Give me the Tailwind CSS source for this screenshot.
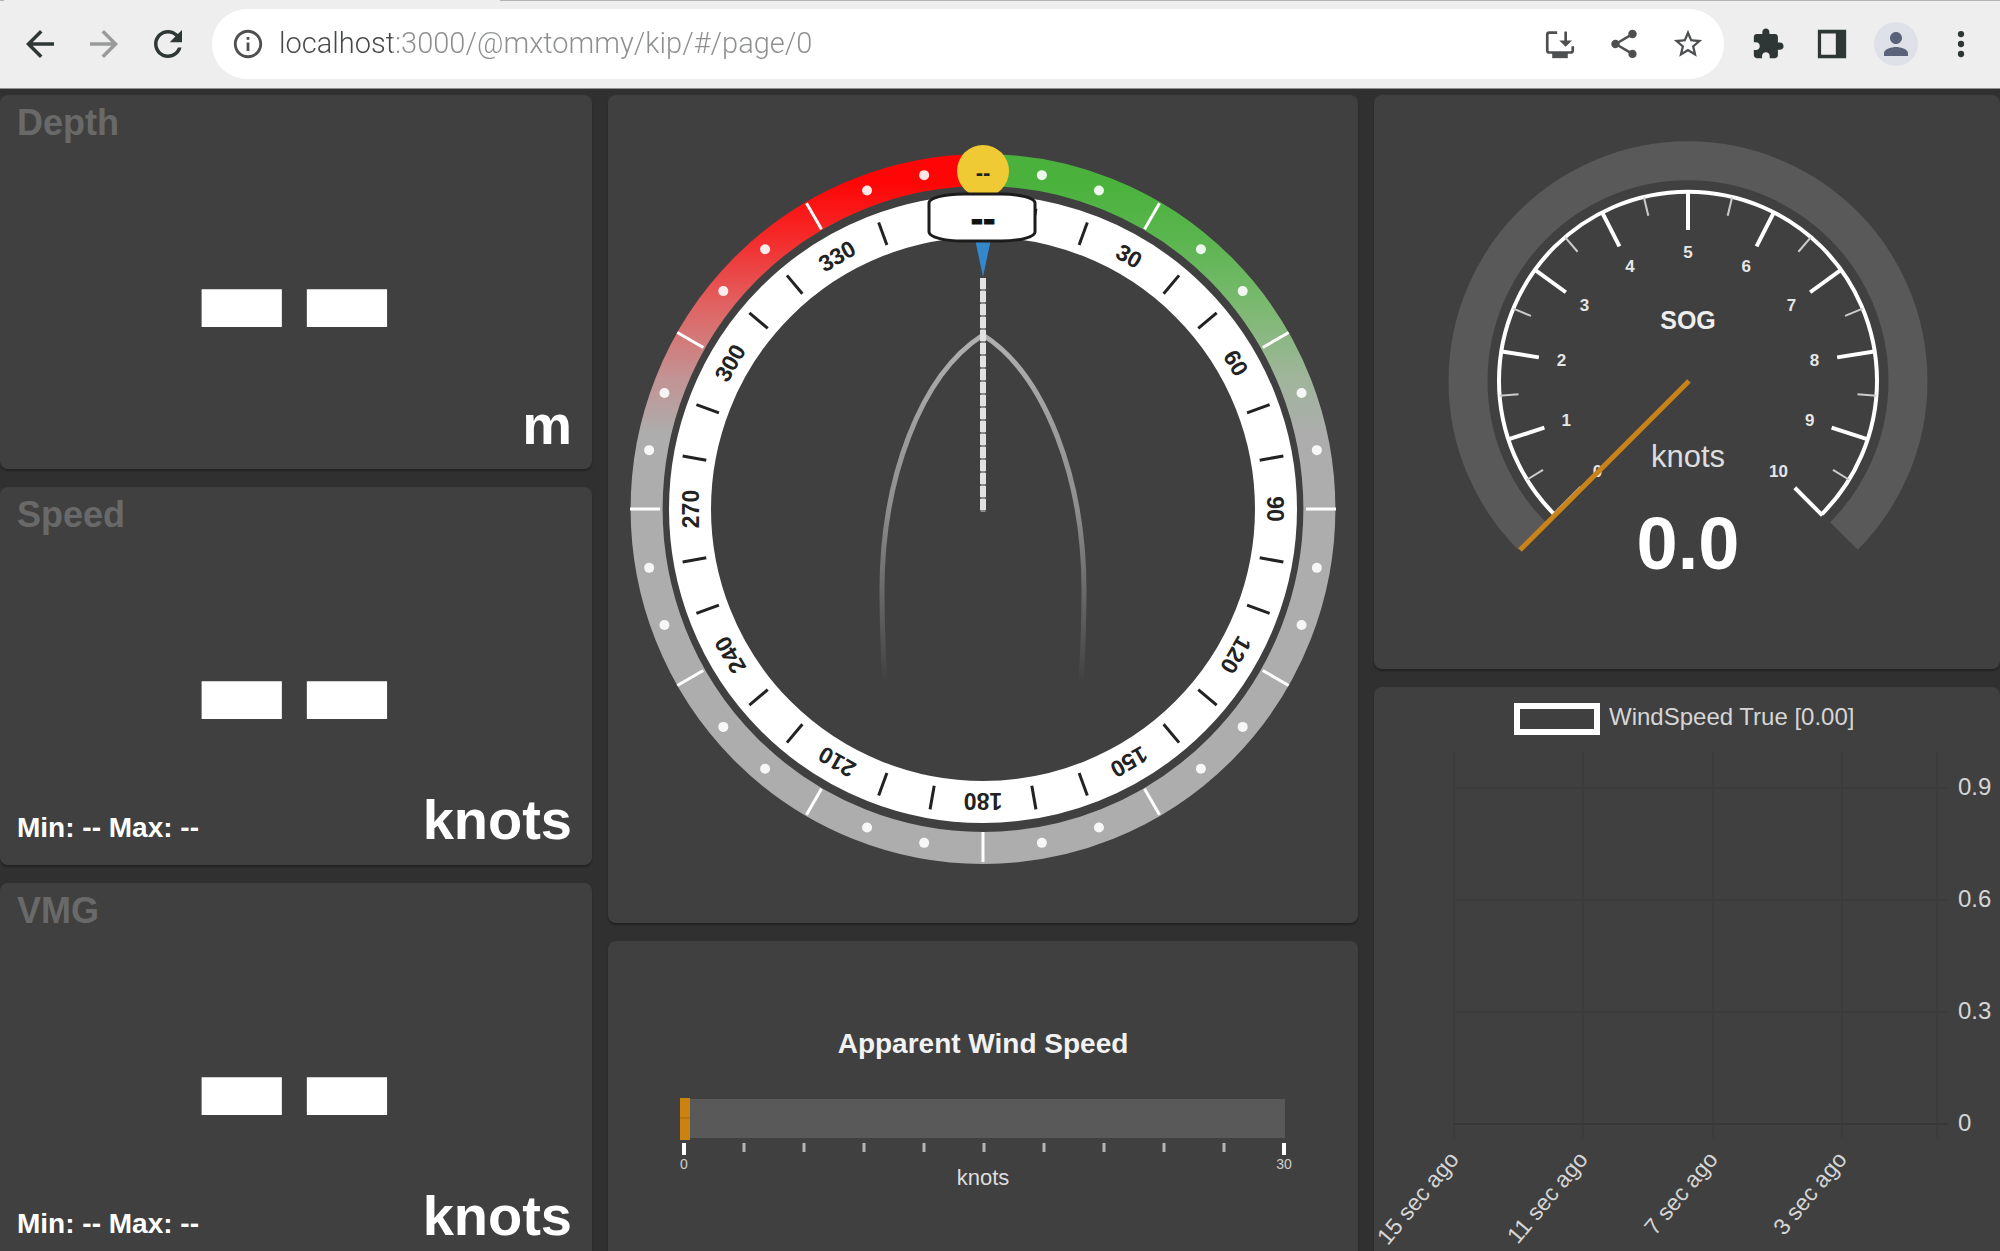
<!DOCTYPE html>
<html lang="en">
  <head>
    <meta charset="UTF-8" />
    <meta name="viewport" content="width=device-width, initial-scale=1.0" />
    <title>KIP</title>
    <script src="https://cdn.jsdelivr.net/npm/@tailwindcss/browser@4"></script>
  </head>
  <body class="flex h-screen flex-col overflow-hidden bg-[#303030] font-['Liberation_Sans',Arial,sans-serif] text-white">
    <!-- Browser toolbar -->
    <header class="relative flex shrink-0 items-center border-b border-[#8f8f8f] bg-[#eeeeee] py-[9px] pr-[18px] pl-[19px] text-[#2f3636]">
      <div class="absolute inset-x-0 top-0 flex h-px">
        <span class="w-1 bg-[#b4b4b4]"></span>
        <span class="w-[496px]"></span>
        <span class="flex-1 bg-[#b4b4b4]"></span>
      </div>
      <div class="mr-[23px] flex gap-[22px]">
        <button aria-label="Back">
          <svg class="size-[42px]" viewBox="0 0 24 24" fill="currentColor"><path d="M20 11H7.83l5.59-5.59L12 4l-8 8 8 8 1.41-1.41L7.83 13H20v-2z" /></svg>
        </button>
        <button aria-label="Forward" class="text-[#999b9b]">
          <svg class="size-[42px]" viewBox="0 0 24 24" fill="currentColor"><path d="M12 4l-1.41 1.41L16.17 11H4v2h12.17l-5.58 5.59L12 20l8-8z" /></svg>
        </button>
        <button aria-label="Reload">
          <svg class="size-[42px]" viewBox="0 0 24 24" fill="currentColor"><path d="M17.65 6.35C16.2 4.9 14.21 4 12 4c-4.42 0-7.99 3.58-7.99 8s3.57 8 7.99 8c3.73 0 6.84-2.55 7.73-6h-2.08c-.82 2.33-3.04 4-5.65 4-3.31 0-6-2.69-6-6s2.69-6 6-6c1.66 0 3.14.69 4.22 1.78L13 11h7V4l-2.35 2.35z" /></svg>
        </button>
      </div>
      <div class="flex h-[70px] flex-1 items-center rounded-full bg-white px-[19px] text-[#4d4f51]">
        <button aria-label="Site information" class="mr-[14px]">
          <svg class="size-[34px]" viewBox="0 0 24 24" fill="currentColor"><path d="M11 7h2v2h-2zm0 4h2v6h-2zm1-9C6.48 2 2 6.48 2 12s4.48 10 10 10 10-4.48 10-10S17.52 2 12 2zm0 18c-4.41 0-8-3.59-8-8s3.59-8 8-8 8 3.59 8 8-3.59 8-8 8z" /></svg>
        </button>
        <input
          type="text"
          aria-label="Address"
          value="localhost:3000/@mxtommy/kip/#/page/0"
          class="min-w-0 flex-1 bg-[linear-gradient(90deg,#46484a_113px,#8c8e90_113px)] bg-clip-text font-[Roboto,sans-serif] text-[29px] font-light text-transparent outline-none"
        />
        <div class="flex gap-[30px]">
          <button aria-label="Install app">
            <svg class="size-[34px]" viewBox="0 0 24 24" fill="none" stroke="currentColor" stroke-width="1.9"><path d="M10 4H4.500Q3 4 3 5.500V16.500Q3 18 4.500 18H19.500Q21 18 21 16.500V13.500" /><path d="M16 3.200V12" /><path d="M11.500 9.500h9L16 14z" fill="currentColor" stroke="none" /><path d="M6.500 18h11v4h-11z" fill="currentColor" stroke="none" /></svg>
          </button>
          <button aria-label="Share">
            <svg class="size-[34px]" viewBox="0 0 24 24" fill="currentColor"><path d="M18 16.080c-.76 0-1.440.3-1.960.77L8.910 12.700c.05-.23.09-.46.09-.7s-.04-.47-.09-.7l7.050-4.110c.54.5 1.250.81 2.040.81 1.660 0 3-1.340 3-3s-1.340-3-3-3-3 1.340-3 3c0 .24.04.47.09.7L8.040 9.810C7.500 9.310 6.790 9 6 9c-1.660 0-3 1.340-3 3s1.340 3 3 3c.79 0 1.500-.31 2.040-.81l7.120 4.160c-.05.21-.08.43-.08.65 0 1.610 1.310 2.920 2.920 2.920s2.920-1.310 2.920-2.920-1.310-2.920-2.920-2.920z" /></svg>
          </button>
          <button aria-label="Bookmark this page">
            <svg class="size-[34px]" viewBox="0 0 24 24" fill="currentColor"><path d="M22 9.240l-7.190-.62L12 2 9.190 8.630 2 9.240l5.460 4.730L5.820 21 12 17.270 18.180 21l-1.630-7.030L22 9.240zM12 15.400l-3.760 2.270 1-4.280-3.320-2.880 4.380-.38L12 6.100l1.710 4.040 4.380.38-3.320 2.880 1 4.280L12 15.400z" /></svg>
          </button>
        </div>
      </div>
      <button aria-label="Extensions" class="ml-[27px]">
        <svg class="size-[34px]" viewBox="0 0 24 24" fill="currentColor"><path d="M20.500 11H19V7c0-1.100-.9-2-2-2h-4V3.500C13 2.120 11.880 1 10.500 1S8 2.120 8 3.500V5H4c-1.100 0-1.990.9-1.990 2v3.800H3.500c1.490 0 2.700 1.210 2.700 2.700s-1.210 2.700-2.700 2.700H2V20c0 1.100.9 2 2 2h3.800v-1.500c0-1.490 1.210-2.700 2.700-2.700s2.700 1.210 2.700 2.700V22H17c1.100 0 2-.9 2-2v-4h1.500c1.380 0 2.500-1.120 2.500-2.500S21.880 11 20.500 11z" /></svg>
      </button>
      <button aria-label="Side panel" class="ml-[30px]">
        <svg class="size-[34px]" viewBox="0 0 24 24" fill="currentColor"><path fill-rule="evenodd" d="M2 2h20v20H2zM4.300 4.500v15h10.400v-15z" /></svg>
      </button>
      <button aria-label="Profile" class="ml-[25px] flex size-11 items-center justify-center rounded-full bg-[#dee1e7] text-[#5a6379]">
        <svg class="size-9" viewBox="0 0 24 24" fill="currentColor"><path d="M12 12c2.210 0 4-1.790 4-4s-1.790-4-4-4-4 1.790-4 4 1.790 4 4 4zm0 2c-2.670 0-8 1.340-8 4v2h16v-2c0-2.660-5.330-4-8-4z" /></svg>
      </button>
      <button aria-label="Menu" class="ml-[22px]">
        <svg class="size-[42px]" viewBox="0 0 24 24" fill="currentColor"><circle cx="12" cy="6.300" r="1.800" /><circle cx="12" cy="12" r="1.800" /><circle cx="12" cy="17.700" r="1.800" /></svg>
      </button>
    </header>

    <!-- Dashboard, the last row runs on under the window edge -->
    <main class="-mb-[10px] grid min-h-0 flex-1 grid-cols-[592fr_750fr_626fr] gap-4 pt-[6px]">
      <div class="flex min-h-0 flex-col gap-[18px]">
        <section class="grid min-h-0 flex-[374] rounded-lg bg-[#404040] pr-5 pl-[17px] font-bold shadow-[0_2px_2px_rgba(0,0,0,0.3)]">
          <h2 class="col-start-1 row-start-1 self-start pt-[10px] text-[36px] leading-none text-[#696969]">Depth</h2>
          <p class="col-start-1 row-start-1 place-self-center pb-[2px] text-[316px] leading-none">--</p>
          <p class="col-start-1 row-start-1 place-self-end pb-4 text-[56px] leading-none">m</p>
        </section>
        <section class="grid min-h-0 flex-[378] rounded-lg bg-[#404040] pr-5 pl-[17px] font-bold shadow-[0_2px_2px_rgba(0,0,0,0.3)]">
          <h2 class="col-start-1 row-start-1 self-start pt-[10px] text-[36px] leading-none text-[#696969]">Speed</h2>
          <p class="col-start-1 row-start-1 place-self-center pb-[6px] text-[316px] leading-none">--</p>
          <div class="col-start-1 row-start-1 flex items-end justify-between self-end pb-[17px]">
            <p class="pb-[6px] text-[28px] leading-none">Min: -- Max: --</p>
            <p class="text-[56px] leading-none">knots</p>
          </div>
        </section>
        <section class="grid min-h-0 flex-[378] rounded-lg bg-[#404040] pr-5 pl-[17px] font-bold shadow-[0_2px_2px_rgba(0,0,0,0.3)]">
          <h2 class="col-start-1 row-start-1 self-start pt-[10px] text-[36px] leading-none text-[#696969]">VMG</h2>
          <p class="col-start-1 row-start-1 place-self-center pb-[6px] text-[316px] leading-none">--</p>
          <div class="col-start-1 row-start-1 flex items-end justify-between self-end pb-[17px]">
            <p class="pb-[6px] text-[28px] leading-none">Min: -- Max: --</p>
            <p class="text-[56px] leading-none">knots</p>
          </div>
        </section>
      </div>

      <div class="flex min-h-0 flex-col gap-[18px]">
        <!-- Wind compass -->
        <section class="min-h-0 flex-[828] rounded-lg bg-[#404040] shadow-[0_2px_2px_rgba(0,0,0,0.3)]">
          <svg class="size-full" viewBox="0 0 750 828" role="img" aria-label="Wind compass">
            <defs>
              <linearGradient id="port" gradientUnits="userSpaceOnUse" x1="0" y1="59" x2="0" y2="339">
                <stop offset="0.1" stop-color="#ff0505" />
                <stop offset="0.3" stop-color="#f52a2a" />
                <stop offset="0.55" stop-color="#e06464" />
                <stop offset="0.8" stop-color="#c39393" />
                <stop offset="1" stop-color="#adadad" />
              </linearGradient>
              <linearGradient id="starboard" gradientUnits="userSpaceOnUse" x1="0" y1="59" x2="0" y2="339">
                <stop offset="0.1" stop-color="#4ab23c" />
                <stop offset="0.3" stop-color="#5ab54e" />
                <stop offset="0.55" stop-color="#7cb971" />
                <stop offset="0.8" stop-color="#a0b59b" />
                <stop offset="1" stop-color="#adadad" />
              </linearGradient>
              <linearGradient id="hull" gradientUnits="userSpaceOnUse" x1="0" y1="240" x2="0" y2="588">
                <stop offset="0" stop-color="#b0b0b0" />
                <stop offset="0.5" stop-color="#8e8e8e" />
                <stop offset="1" stop-color="#404040" />
              </linearGradient>
            </defs>
            <path d="M375 75A336.500 339 0 0 0 375 753" fill="none" stroke="url(#port)" stroke-width="32" />
            <path d="M375 75A336.500 339 0 0 1 375 753" fill="none" stroke="url(#starboard)" stroke-width="32" />
            <circle cx="375" cy="414" r="293" fill="none" stroke="#ffffff" stroke-width="42" />
            <g id="compassMarks"></g>
            <path d="M375 240C312 280 274 385 274 495C274 535 275 555 277 588M375 240C438 280 476 385 476 495C476 535 475 555 473 588" fill="none" stroke="url(#hull)" stroke-width="5" />
            <path d="M375 183V417" stroke="#8a8a8a" stroke-width="5" />
            <path d="M375 183V417" stroke="#e2e2e2" stroke-width="6" stroke-dasharray="11 2" />
            <path d="M367 144h16l-8 38z" fill="#3487cb" />
            <circle cx="375" cy="76" r="26" fill="#efca34" />
            <text x="375" y="85" font-size="22" font-weight="700" fill="#222222" text-anchor="middle">--</text>
            <rect x="321" y="99" width="106" height="47" rx="34" ry="9" fill="#ffffff" stroke="#1c1c1c" stroke-width="3" />
            <text x="375" y="136" font-size="37" font-weight="700" fill="#111111" stroke="#111111" stroke-width="1" text-anchor="middle">--</text>
          </svg>
        </section>

        <!-- Apparent wind speed -->
        <section class="min-h-0 flex-[320] rounded-lg bg-[#404040] shadow-[0_2px_2px_rgba(0,0,0,0.3)]">
          <svg class="size-full" viewBox="0 0 750 320" role="img" aria-label="Apparent Wind Speed">
            <text x="375" y="112" font-size="28" font-weight="700" fill="#f2f2f2" text-anchor="middle">Apparent Wind Speed</text>
            <rect x="76" y="158" width="601" height="39" fill="#595959" />
            <rect x="72" y="157" width="10" height="42" fill="#cb8210" />
            <path d="M72 177h10" stroke="#a5690f" stroke-width="1" />
            <g id="linearMarks"></g>
            <text x="76" y="228" font-size="14" fill="#cfcfcf" text-anchor="middle">0</text>
            <text x="676" y="228" font-size="14" fill="#cfcfcf" text-anchor="middle">30</text>
            <text x="375" y="244" font-size="22" fill="#dddddd" text-anchor="middle">knots</text>
          </svg>
        </section>
      </div>

      <div class="flex min-h-0 flex-col gap-[18px]">
        <!-- Speed over ground -->
        <section class="min-h-0 flex-[574] rounded-lg bg-[#404040] shadow-[0_2px_2px_rgba(0,0,0,0.3)]">
          <svg class="size-full" viewBox="0 0 626 574" role="img" aria-label="SOG gauge">
            <path d="M158 441A220 220 0 1 1 470 441" fill="none" stroke="#595959" stroke-width="39" />
            <path d="M180 419A189 189 0 1 1 448 419" fill="none" stroke="#ffffff" stroke-width="4" />
            <g id="radialMarks"></g>
            <text x="314" y="234" font-size="25" font-weight="700" fill="#eeeeee" text-anchor="middle">SOG</text>
            <text x="314" y="372" font-size="31" fill="#dddddd" text-anchor="middle">knots</text>
            <text x="314" y="474" font-size="74" font-weight="700" fill="#ffffff" text-anchor="middle">0.0</text>
            <path d="M315 286L146 455" stroke="#c98317" stroke-width="5" />
          </svg>
        </section>

        <!-- True wind history -->
        <section class="min-h-0 flex-[574] rounded-lg bg-[#404040] shadow-[0_2px_2px_rgba(0,0,0,0.3)]">
          <svg class="size-full" viewBox="0 0 626 574" role="img" aria-label="WindSpeed True history">
            <rect x="143" y="19" width="80" height="26" fill="none" stroke="#ffffff" stroke-width="6" />
            <text x="235" y="38" font-size="24" fill="#d6d6d6">WindSpeed True [0.00]</text>
            <g id="chartMarks"></g>
          </svg>
        </section>
      </div>
    </main>

    <script>
      const SVG_NS = "http://www.w3.org/2000/svg";

      function add(parentId, tag, attrs, text) {
        const el = document.createElementNS(SVG_NS, tag);
        for (const key in attrs) el.setAttribute(key, attrs[key]);
        if (text !== undefined) el.textContent = text;
        document.getElementById(parentId).appendChild(el);
      }

      // 0 degrees is up, clockwise
      function polar(cx, cy, r, deg) {
        const a = (deg * Math.PI) / 180;
        return [cx + r * Math.sin(a), cy - r * Math.cos(a)];
      }

      function tick(parentId, cx, cy, r1, r2, deg, color, width) {
        const [x1, y1] = polar(cx, cy, r1, deg);
        const [x2, y2] = polar(cx, cy, r2, deg);
        add(parentId, "line", { x1, y1, x2, y2, stroke: color, "stroke-width": width });
      }

      function drawCompass() {
        for (let deg = 0; deg < 360; deg += 10) {
          if (deg % 30 !== 0) {
            const [cx, cy] = polar(375, 414, 339, deg);
            add("compassMarks", "circle", { cx, cy, r: 5, fill: "#ffffff", "fill-opacity": 0.9 });
            tick("compassMarks", 375, 414, 281, 305, deg, "#222222", 3);
            continue;
          }
          tick("compassMarks", 375, 414, 323, 353, deg, "#ffffff", 3);
          if (deg === 0) continue;
          const [x, y] = polar(375, 414, 284, deg);
          add(
            "compassMarks",
            "text",
            {
              x,
              y,
              transform: `rotate(${deg} ${x} ${y})`,
              "font-size": 23,
              "font-weight": 700,
              fill: "#222222",
              "text-anchor": "middle",
            },
            deg
          );
        }
      }

      function drawRadial() {
        for (let i = 0; i <= 20; i++) {
          const deg = -135 + i * 13.5;
          if (i % 2) {
            tick("radialMarks", 314, 286, 170, 189, deg, "#cccccc", 2);
            continue;
          }
          tick("radialMarks", 314, 286, 151, 190, deg, "#ffffff", 4);
          const [x, y] = polar(314, 286, 128, deg);
          add(
            "radialMarks",
            "text",
            { x, y: y + 5, "font-size": 17, "font-weight": 700, fill: "#e6e6e6", "text-anchor": "middle" },
            i / 2
          );
        }
      }

      function drawLinear() {
        for (let i = 0; i <= 10; i++) {
          const major = i % 10 === 0;
          add("linearMarks", "line", {
            x1: 76 + i * 60,
            x2: 76 + i * 60,
            y1: 202,
            y2: major ? 214 : 211,
            stroke: major ? "#ffffff" : "#b4b4b4",
            "stroke-width": major ? 4 : 3,
          });
        }
      }

      function drawChart() {
        [80, 209, 339, 468, 563].forEach((x) => {
          add("chartMarks", "line", { x1: x, x2: x, y1: 64, y2: 451, stroke: "#3c3c3c", "stroke-width": 2 });
        });
        [[101, "0.9"], [213, "0.6"], [325, "0.3"], [437, "0"]].forEach(([y, label]) => {
          add("chartMarks", "line", {
            x1: 80,
            x2: 574,
            y1: y,
            y2: y,
            stroke: label === "0" ? "#373737" : "#3c3c3c",
            "stroke-width": 2,
          });
          add("chartMarks", "text", { x: 584, y: y + 7, "font-size": 24, fill: "#d6d6d6" }, label);
        });
        [[80, "15 sec ago"], [209, "11 sec ago"], [339, "7 sec ago"], [468, "3 sec ago"]].forEach(([x, label]) => {
          add(
            "chartMarks",
            "text",
            {
              x: x + 6,
              y: 473,
              transform: `rotate(-50 ${x + 6} 473)`,
              "font-size": 23,
              fill: "#d6d6d6",
              "text-anchor": "end",
            },
            label
          );
        });
      }

      drawCompass();
      drawRadial();
      drawLinear();
      drawChart();
    </script>
  </body>
</html>
